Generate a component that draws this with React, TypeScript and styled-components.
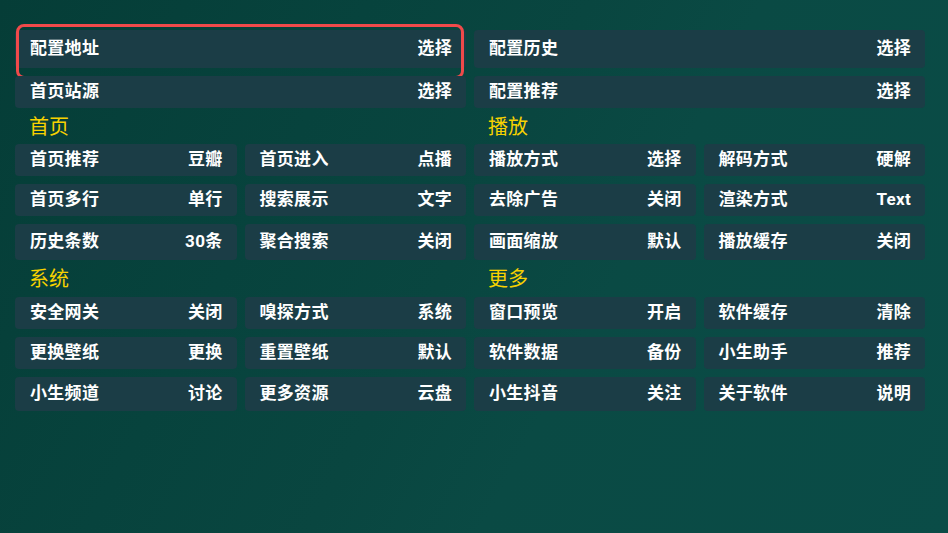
import React from "react";
import styled, { createGlobalStyle } from "styled-components";

const Global = createGlobalStyle`
  html, body { margin: 0; padding: 0; }
  body {
    width: 948px;
    height: 533px;
    overflow: hidden;
    font-family: Roboto, "Noto Sans CJK SC", sans-serif;
  }
`;

const Page = styled.div`
  width: 948px;
  height: 533px;
  box-sizing: border-box;
  padding: 30px 23px 0 15px;
  background: linear-gradient(
    118deg,
    #053d37 0%,
    #07433d 30%,
    #094640 48%,
    #0a4a44 62%,
    #0a4c47 100%
  );
`;

const Grid = styled.div`
  display: grid;
  grid-template-columns: repeat(4, 1fr);
  grid-template-rows: 38px 32px 20px 32px 32px 36px 21px 32px 32px 34px;
  column-gap: 8px;
  row-gap: 8px;
`;

const Item = styled.div<{ $wide?: boolean }>`
  position: relative;
  grid-column: span ${(p) => (p.$wide ? 2 : 1)};
  display: flex;
  align-items: center;
  justify-content: space-between;
  padding: 0 14px 2px 15px;
  background: #1b3d46;
  border-radius: 4px;
  color: #ffffff;
  font-size: 17px;
  line-height: 20px;
  font-weight: 700;
  letter-spacing: 0.3px;
`;

const Focus = styled.div`
  position: absolute;
  left: 1px;
  right: 2px;
  top: -6px;
  bottom: -11px;
  border: 3px solid #ef4a4a;
  border-radius: 8px;
  pointer-events: none;
`;

const Title = styled.div`
  grid-column: span 2;
  color: #f7d200;
  font-size: 20px;
  line-height: 20px;
  padding-left: 14px;
  font-family: "Noto Sans CJK SC", sans-serif;
`;

const Label = styled.span``;
const Value = styled.span``;

type Cell = [string, string];

const top: Cell[] = [
  ["配置地址", "选择"],
  ["配置历史", "选择"],
  ["首页站源", "选择"],
  ["配置推荐", "选择"],
];

const section1: Cell[] = [
  ["首页推荐", "豆瓣"],
  ["首页进入", "点播"],
  ["播放方式", "选择"],
  ["解码方式", "硬解"],
  ["首页多行", "单行"],
  ["搜索展示", "文字"],
  ["去除广告", "关闭"],
  ["渲染方式", "Text"],
  ["历史条数", "30条"],
  ["聚合搜索", "关闭"],
  ["画面缩放", "默认"],
  ["播放缓存", "关闭"],
];

const section2: Cell[] = [
  ["安全网关", "关闭"],
  ["嗅探方式", "系统"],
  ["窗口预览", "开启"],
  ["软件缓存", "清除"],
  ["更换壁纸", "更换"],
  ["重置壁纸", "默认"],
  ["软件数据", "备份"],
  ["小生助手", "推荐"],
  ["小生频道", "讨论"],
  ["更多资源", "云盘"],
  ["小生抖音", "关注"],
  ["关于软件", "说明"],
];

const Row = ({ cell, wide, focused }: { cell: Cell; wide?: boolean; focused?: boolean }) => (
  <Item $wide={wide}>
    <Label>{cell[0]}</Label>
    <Value>{cell[1]}</Value>
    {focused && <Focus />}
  </Item>
);

export default function App() {
  return (
    <>
      <Global />
      <Page>
        <Grid>
          {top.map((c, i) => (
            <Row key={c[0]} cell={c} wide focused={i === 0} />
          ))}
          <Title>首页</Title>
          <Title>播放</Title>
          {section1.map((c) => (
            <Row key={c[0]} cell={c} />
          ))}
          <Title>系统</Title>
          <Title>更多</Title>
          {section2.map((c) => (
            <Row key={c[0]} cell={c} />
          ))}
        </Grid>
      </Page>
    </>
  );
}
